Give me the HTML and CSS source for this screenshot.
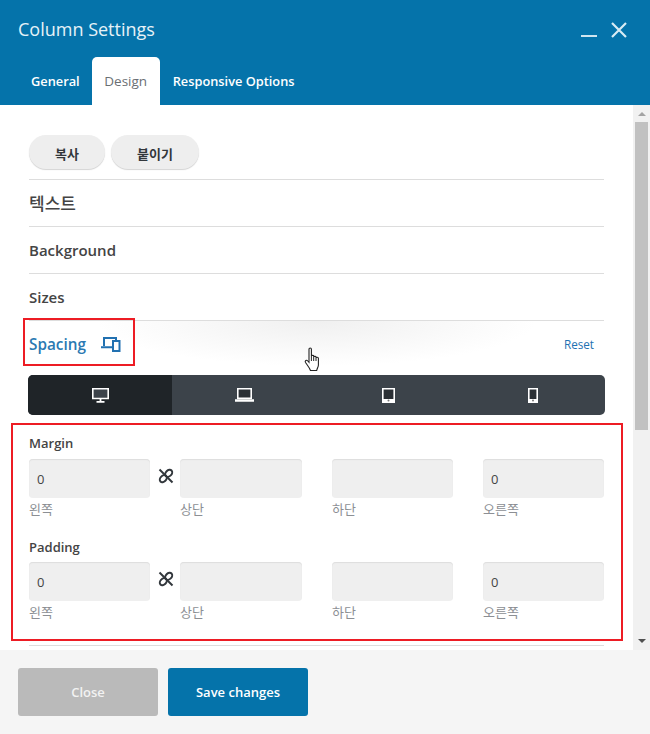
FILE: index.html
```html
<!DOCTYPE html>
<html lang="ko">
<head>
<meta charset="utf-8">
<title>Column Settings</title>
<link rel="stylesheet" href="styles.css">
</head>
<body>
<div class="modal">
  <header class="header">
    <div class="title-row">
      <h1 class="title">Column Settings</h1>
      <div class="win-controls">
        <span class="minimize"></span>
        <svg class="close-x" width="18" height="18" viewBox="0 0 18 18"><path d="M2 2 L16 16 M16 2 L2 16" stroke="#d8ebf4" stroke-width="2.2" fill="none"/></svg>
      </div>
    </div>
    <nav class="tabs">
      <span class="tab">General</span>
      <span class="tab tab-active">Design</span>
      <span class="tab">Responsive Options</span>
    </nav>
  </header>
  <div class="body">
    <main class="content">
      <div class="actions">
        <button class="pill pill-copy">복사</button>
        <button class="pill pill-paste">붙이기</button>
      </div>
      <div class="section section-ko">텍스트</div>
      <div class="section">Background</div>
      <div class="section">Sizes</div>
      <div class="section section-open">
        <span class="spacing-title">Spacing</span>
        <svg class="resp-icon" width="20" height="16" viewBox="0 0 20 16"><path d="M3 10V2h12v2.500M0 11.200h11" stroke="#2271b1" stroke-width="2" fill="none"/><rect x="12" y="5" width="6.500" height="10" stroke="#2271b1" stroke-width="2" fill="none"/></svg>
        <span class="reset">Reset</span>
      </div>
      <div class="devices">
        <div class="device device-active"><svg width="17" height="15" viewBox="0 0 17 15"><path d="M.8 .8h15.400v9.700H.8z" fill="#3c434a" stroke="#fff" stroke-width="1.600"/><path d="M8.500 11v2M4.500 13.800h8" stroke="#fff" stroke-width="1.800" fill="none"/></svg></div>
        <div class="device"><svg width="19" height="14" viewBox="0 0 19 14"><path d="M2.800 .8h13.400v9.400H2.800z" fill="#2a2f34" stroke="#fff" stroke-width="1.600"/><path d="M0 12.500h19" stroke="#fff" stroke-width="2.500"/></svg></div>
        <div class="device"><svg width="13" height="15" viewBox="0 0 13 15"><path d="M.8 .8h11.400v13.400H.8z" fill="#2a2f34" stroke="#fff" stroke-width="1.600"/><path d="M1 12.500h11" stroke="#fff" stroke-width="3"/><circle cx="6.500" cy="12.500" r="1" fill="#777"/></svg></div>
        <div class="device"><svg width="10" height="15" viewBox="0 0 10 15"><path d="M.8 .8h8.400v13.400H.8z" fill="#2a2f34" stroke="#fff" stroke-width="1.600"/><path d="M1 12.500h8" stroke="#fff" stroke-width="3"/><circle cx="5" cy="12.500" r="1" fill="#777"/></svg></div>
      </div>
      <div class="group group-margin">
        <div class="group-label">Margin</div>
        <div class="fields">
          <div class="field"><div class="input">0</div><div class="hint">왼쪽</div></div>
          <svg class="link" width="16" height="16" viewBox="0 0 16 16"><path d="M1.500 1.500 L14.500 14.500" stroke="#32373c" stroke-width="2"/><ellipse cx="10.700" cy="5.300" rx="4" ry="2.900" transform="rotate(-45 10.700 5.300)" stroke="#32373c" stroke-width="2" fill="none"/><ellipse cx="5.300" cy="10.700" rx="4" ry="2.900" transform="rotate(-45 5.300 10.700)" stroke="#32373c" stroke-width="2" fill="none"/></svg>
          <div class="field"><div class="input"></div><div class="hint">상단</div></div>
          <div class="field"><div class="input"></div><div class="hint">하단</div></div>
          <div class="field"><div class="input">0</div><div class="hint">오른쪽</div></div>
        </div>
      </div>
      <div class="group group-padding">
        <div class="group-label">Padding</div>
        <div class="fields">
          <div class="field"><div class="input">0</div><div class="hint">왼쪽</div></div>
          <svg class="link" width="16" height="16" viewBox="0 0 16 16"><path d="M1.500 1.500 L14.500 14.500" stroke="#32373c" stroke-width="2"/><ellipse cx="10.700" cy="5.300" rx="4" ry="2.900" transform="rotate(-45 10.700 5.300)" stroke="#32373c" stroke-width="2" fill="none"/><ellipse cx="5.300" cy="10.700" rx="4" ry="2.900" transform="rotate(-45 5.300 10.700)" stroke="#32373c" stroke-width="2" fill="none"/></svg>
          <div class="field"><div class="input"></div><div class="hint">상단</div></div>
          <div class="field"><div class="input"></div><div class="hint">하단</div></div>
          <div class="field"><div class="input">0</div><div class="hint">오른쪽</div></div>
        </div>
      </div>
      <div class="end-line"></div>
    </main>
    <div class="scrollbar">
      <span class="arrow-up"></span>
      <div class="thumb"></div>
      <span class="arrow-down"></span>
    </div>
  </div>
  <footer class="footer">
    <button class="btn btn-close">Close</button>
    <button class="btn btn-save">Save changes</button>
  </footer>
  <div class="mark mark-spacing"></div>
  <div class="mark mark-fields"></div>
  <svg class="cursor" width="18" height="25" viewBox="0 0 18 25"><path d="M5 2.200c0-1.600 2.400-1.600 2.400 0V9c0-1 2.300-1 2.300 0v1c0-1 2.300-1 2.300 0v1c0-1 2.400-1 2.400 .3V18c0 2-1.200 3-1.700 5.500H6.500C5.500 20.500 3.500 18.500 1.500 15.500c-1-1.800 1-3 2.300-1.500L5 15.300z" fill="#fff" stroke="#222" stroke-width="1.100"/><path d="M7.400 9v5M9.700 10v4M12 11v3" stroke="#222" stroke-width="1" fill="none"/></svg>
</div>
</body>
</html>
```
FILE: styles.css
```css
* { box-sizing: border-box; }
html, body { margin: 0; padding: 0; }
body { font-family: "Open Sans", "Noto Sans CJK KR", sans-serif; background: #fff; overflow: hidden; }
.modal { position: relative; width: 650px; height: 734px; display: flex; flex-direction: column; overflow: hidden; }

.header { height: 105px; flex: none; background: #0573aa; display: flex; flex-direction: column; justify-content: space-between; }
.title-row { display: flex; justify-content: space-between; padding: 16px 22px 0 18px; }
.title { margin: 0; font-size: 18px; line-height: 27px; font-weight: 400; color: #e6f2f8; }
.win-controls { display: flex; align-items: flex-start; gap: 13px; padding-top: 4px; }
.minimize { width: 16px; height: 2px; background: #cfe5f0; margin-top: 15px; }
.close-x { display: block; margin-top: 1px; }
.tabs { display: flex; padding-left: 18px; height: 48px; }
.tab { padding: 0 13px; font-size: 12.800px; font-weight: 600; line-height: 48px; color: #fff; }
.tab-active { width: 68px; margin-left: -1px; padding: 0; text-align: center; font-size: 13.500px; background: #fff; color: #6a6f74; font-weight: 400; border-radius: 5px 5px 0 0; }

.body { height: 545px; flex: none; display: flex; }
.content { width: 633px; flex: none; padding: 30px 29px 0; display: flex; flex-direction: column; }
.actions { display: flex; gap: 6px; height: 45px; padding-bottom: 10px; border-bottom: 1px solid #ddd; }
.pill { height: 34px; border: 0; border-radius: 17px; background: #eee; box-shadow: 0 1px 1px #d4d4d4; font: 600 13px/34px "Open Sans", "Noto Sans CJK KR", sans-serif; color: #32373c; padding: 2px 0 0; }
.pill-copy { width: 76px; }
.pill-paste { width: 88px; }
.section { height: 47px; display: flex; align-items: center; padding-bottom: 1px; border-bottom: 1px solid #ddd; font-size: 15px; font-weight: 600; color: #444; }
.section-ko { font-size: 17px; font-weight: 500; padding-bottom: 2px; }
.section-open { position: relative; height: 54px; border-bottom: 0; padding-bottom: 8px; background: radial-gradient(ellipse 220px 45px at 50% 0, #f0f0f0 0, #fff 100%); }
.spacing-title { color: #2b79b2; font-size: 15.300px; }
.resp-icon { margin-left: 15px; }
.reset { margin-left: auto; margin-right: 10px; font-size: 11.700px; font-weight: 400; color: #2271b1; }

.devices { width: 577px; height: 40px; margin-left: -1px; flex: none; display: grid; grid-template-columns: repeat(4, 1fr); background: #3c434a; border-radius: 5px; overflow: hidden; }
.device { display: flex; align-items: center; justify-content: center; }
.device-active { background: #1f2428; }

.group-label { font-size: 13px; font-weight: 600; line-height: 18px; color: #444; margin-bottom: 7px; }
.group-margin { padding-top: 19px; height: 123px; flex: none; }
.group-padding { height: 106px; flex: none; }
.group-padding .group-label { margin-bottom: 6px; }
.fields { display: flex; }
.field { width: 121px; flex: none; }
.field + .link + .field { width: 122px; }
.field + .link + .field + .field { margin-left: 30px; }
.field + .link + .field + .field + .field { margin-left: 30px; }
.input { height: 39px; background: #efefef; border-radius: 4px; box-shadow: inset 0 1px 1px #ddd; padding-left: 8px; font-size: 13px; line-height: 41px; color: #444; }
.hint { font-size: 13px; line-height: 18px; margin-top: 2px; color: #8c8f94; }
.link { flex: none; margin: 9px 6px 0 8px; }
.end-line { height: 1px; background: #ddd; margin-top: 1px; }

.scrollbar { width: 17px; flex: none; background: #f1f1f1; display: flex; flex-direction: column; align-items: center; padding-top: 7px; }
.arrow-up { width: 0; height: 0; border: 4px solid transparent; border-top: 0; border-bottom: 4px solid #a3a3a3; flex: none; }
.thumb { width: 13px; height: 308px; background: #c1c1c1; flex: none; margin-top: 6px; }
.arrow-down { width: 0; height: 0; border: 4px solid transparent; border-bottom: 0; border-top: 4px solid #505050; flex: none; margin-top: auto; margin-bottom: 7px; }

.footer { flex: 1; background: #f5f5f5; display: flex; gap: 10px; padding: 18px 18px 0; }
.btn { width: 140px; height: 48px; border: 0; border-radius: 3px; color: #fff; font: 600 13px "Open Sans", sans-serif; }
.btn-close { background: #bababa; color: #f2f2f2; }
.btn-save { background: #0573aa; }

.mark { position: absolute; border: 2px solid #ed1c24; }
.mark-spacing { left: 23px; top: 318px; width: 112px; height: 48px; }
.mark-fields { left: 11px; top: 423px; width: 612px; height: 218px; }
.cursor { position: absolute; left: 304px; top: 347px; }
```
